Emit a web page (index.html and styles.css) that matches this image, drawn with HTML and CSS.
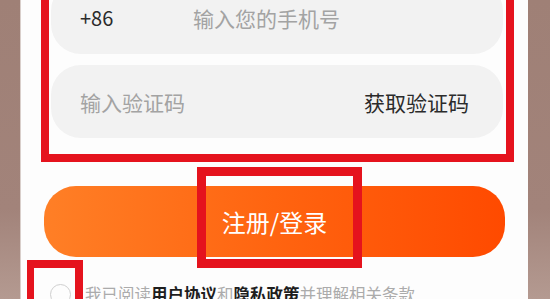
FILE: index.html
```html
<!DOCTYPE html>
<html lang="zh-CN">
<head>
    <meta charset="UTF-8">
    <title>注册/登录</title>
    <link rel="stylesheet" href="styles.css">
</head>
<body>
<div class="screen">
    <div class="form-box">
        <div class="field">
            <span class="code">+86</span>
            <span class="hint">输入您的手机号</span>
        </div>
        <div class="field field-sms">
            <span class="hint">输入验证码</span>
            <span class="get-code">获取验证码</span>
        </div>
    </div>

    <div class="btn-wrap">
        <button class="btn-login" type="button">注册/登录</button>
        <div class="mark mark-btn"></div>
    </div>

    <div class="agree">
        <span class="radio"></span>
        <span class="agree-txt">我已阅读<b>用户协议</b>和<b>隐私政策</b>并理解相关条款</span>
        <div class="mark mark-radio"></div>
    </div>
</div>
</body>
</html>
```

FILE: styles.css
```css
html, body {
    margin: 0;
    height: 100%;
    overflow: hidden;
}

body {
    background: linear-gradient(180deg, #9f8076 0%, #a2837a 70%, #b49a91 100%);
    font-family: "Noto Sans CJK SC", "Noto Sans", sans-serif;
}

.screen {
    position: relative;
    display: flow-root;
    width: 507px;
    height: 100%;
    margin-left: 21px;
    background-color: #fdfdfd;
    box-shadow: -1px 0 0 #d9cfcb;
}

.form-box {
    width: 452px;
    margin: -35px 0 0 20px;
    padding: 8px 3px 16px 2px;
    border: 8px solid #e5131d;
}

.field {
    display: flex;
    align-items: center;
    height: 73px;
    padding: 0 34px 0 29px;
    border-radius: 30px;
    background-color: #f2f2f2;
    font-size: 21px;
}

.field-sms {
    margin-top: 11px;
    justify-content: space-between;
}

.field .code {
    width: 113px;
    font-size: 20px;
    color: #2b2b2b;
}

.field .hint {
    color: #a3a3a3;
}

.field .get-code {
    color: #2b2b2b;
}

.btn-wrap {
    position: relative;
    margin: 24px 0 0 23px;
    width: 461px;
}

.btn-login {
    display: block;
    width: 100%;
    height: 71px;
    border: none;
    border-radius: 32px;
    background: linear-gradient(90deg, #ff7f26 0%, #ff6410 50%, #ff4a00 100%);
    color: #fff;
    font-family: inherit;
    font-size: 24px;
    padding: 0;
}

.mark {
    position: absolute;
    border: 9px solid #e5131d;
}

.mark-btn {
    left: 153px;
    top: -19px;
    width: 147px;
    height: 83px;
}

.agree {
    position: relative;
    display: flex;
    align-items: center;
    height: 24px;
    margin: 25px 0 0 29px;
}

.radio {
    width: 19px;
    height: 19px;
    border: 1.5px solid #cfcfcf;
    border-radius: 50%;
}

.agree-txt {
    margin-left: 14px;
    font-size: 16.5px;
    color: #ababab;
}

.agree-txt b {
    color: #1e1e1e;
}

.mark-radio {
    left: -23px;
    top: -22px;
    width: 41px;
    height: 60px;
    border-width: 8px 8px 8px 7px;
}
```
